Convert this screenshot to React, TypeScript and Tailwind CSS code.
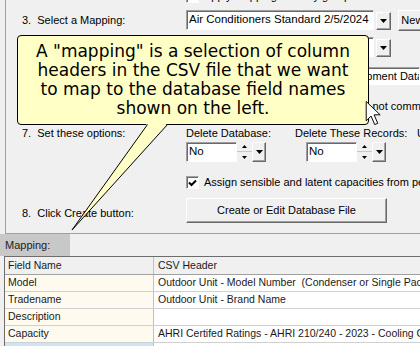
import React from "react";

// Windows-classic style helpers
const raised =
  "bg-[#f0f0f0] border border-t-white border-l-white border-r-[#696969] border-b-[#696969] shadow-[inset_-1px_-1px_0_#a0a0a0]";
const sunken =
  "bg-white border border-t-[#a0a0a0] border-l-[#a0a0a0] border-r-white border-b-white shadow-[inset_1px_1px_0_#696969]";
const label = "w-[180px] shrink-0 pl-[16px]";

function Caret({ up = false, w = 7 }: { up?: boolean; w?: number }) {
  const h = Math.ceil(w / 2);
  return (
    <svg width={w} height={h} viewBox={`0 0 ${w} ${h}`} className="block">
      <polygon
        points={up ? `0,${h} ${w},${h} ${w / 2},0` : `0,0 ${w},0 ${w / 2},${h}`}
        fill="#000"
      />
    </svg>
  );
}

function DropButton() {
  return (
    <div className={`${raised} w-[15px] h-[18px] shrink-0 flex items-center justify-center`}>
      <Caret />
    </div>
  );
}

function Combo({ text }: { text: string }) {
  return (
    <div className="flex items-end gap-[2px] shrink-0">
      <div className={`${sunken} w-[188px] h-[20px] flex items-center pl-[2px] text-[11.5px] whitespace-nowrap overflow-hidden`}>
        {text}
      </div>
      <DropButton />
    </div>
  );
}

function Spinner({ value }: { value: string }) {
  return (
    <div className="flex h-[20px] shrink-0">
      <div className={`${sunken} w-[51px] flex items-center pl-[2px] text-[11.5px]`}>{value}</div>
      <div className="w-[15px] flex flex-col">
        <div className="h-[10px] flex items-center justify-center border-b border-[#c8c8c8]">
          <Caret up w={5} />
        </div>
        <div className="h-[10px] flex items-center justify-center">
          <Caret w={5} />
        </div>
      </div>
      <div className={`${raised} w-[14px] flex items-center justify-center`}>
        <Caret />
      </div>
    </div>
  );
}

function CheckBox({ checked = false }: { checked?: boolean }) {
  return (
    <div className={`${sunken} w-[13px] h-[13px] flex items-center justify-center shrink-0`}>
      {checked && (
        <svg width="9" height="8" viewBox="0 0 9 8">
          <path d="M1 3.5 L3.5 6 L8 1.5" stroke="#000" strokeWidth="2" fill="none" />
        </svg>
      )}
    </div>
  );
}

const rows = [
  { field: "Model", csv: "Outdoor Unit - Model Number  (Condenser or Single Package)" },
  { field: "Tradename", csv: "Outdoor Unit - Brand Name" },
  { field: "Description", csv: "" },
  { field: "Capacity", csv: "AHRI Certifed Ratings - AHRI 210/240 - 2023 - Cooling Capacity (A2) - Single or High Stage (95F), btu/hr" },
];

export default function App() {
  return (
    <div className="relative w-[420px] h-[346px] overflow-hidden bg-[#f0f0f0] text-black text-[11px] font-['Liberation_Sans',Arial,sans-serif]">
      {/* ------------------------------------------------------------------ */}
      {/* Upper group: steps */}
      {/* ------------------------------------------------------------------ */}
      <div className="ml-[5px] h-[234px] border-l border-b border-[#a0a0a0] flex flex-col whitespace-nowrap overflow-hidden">
        {/* row cut off at the top edge */}
        <div className="h-[3px] shrink-0 flex items-end overflow-hidden pl-[180px] gap-[5px] leading-[13px]">
          <CheckBox />
          <span>Apply mapping to every group</span>
        </div>

        <div className="mt-[7px] h-[20px] shrink-0 flex items-center">
          <div className={label}>3.&nbsp;&nbsp;Select a Mapping:</div>
          <Combo text="Air Conditioners Standard 2/5/2024" />
          <div className={`${raised} ml-[7px] w-[74px] h-[21px] flex items-center justify-center shrink-0`}>
            New Mapping
          </div>
        </div>

        <div className="mt-[7px] h-[19px] shrink-0 flex items-center">
          <div className={label}>4.&nbsp;&nbsp;Select a CSV File:</div>
          <Combo text="AHRI Directory Export.csv" />
        </div>

        <div className="mt-[11px] h-[18px] shrink-0 flex items-center">
          <div className={label}>5.&nbsp;&nbsp;Database File:</div>
          <div className={`${sunken} h-[18px] flex-1 flex items-center pl-[2px] overflow-hidden`}>
            C:\Users\Public\Documents\My Equipment Database.accdb
          </div>
        </div>

        <div className="mt-[13px] h-[16px] shrink-0 flex items-center">
          <div className={label}>6.&nbsp;&nbsp;Show fields:</div>
          <span className="shrink-0">Show all the equipment fields that are not commonly used</span>
        </div>

        <div className="mt-[12px] h-[14px] shrink-0 flex items-center">
          <div className={label}>7.&nbsp;&nbsp;Set these options:</div>
          <div className="w-[109px] shrink-0">Delete Database:</div>
          <div className="w-[122px] shrink-0">Delete These Records:</div>
          <div className="shrink-0">Use Defaults:</div>
        </div>

        <div className="mt-[2px] h-[20px] shrink-0 flex pl-[180px]">
          <Spinner value="No" />
          <div className="ml-[40px] shrink-0">
            <Spinner value="No" />
          </div>
        </div>

        <div className="mt-[14px] h-[13px] shrink-0 flex items-center pl-[180px] gap-[5px]">
          <CheckBox checked />
          <span className="shrink-0">Assign sensible and latent capacities from percentages</span>
        </div>

        <div className="mt-[9px] h-[25px] shrink-0 flex">
          <div className={`${label} self-end mb-[3px] leading-[13px]`}>8.&nbsp;&nbsp;Click Create button:</div>
          <div className={`${raised} w-[201px] h-[25px] shrink-0 flex items-center justify-center`}>
            Create or Edit Database File
          </div>
        </div>
      </div>

      {/* ------------------------------------------------------------------ */}
      {/* Mapping grid */}
      {/* ------------------------------------------------------------------ */}
      <div className="h-[22px] flex">
        <div className="w-[70px] bg-[#c8c8c8] pl-[5px] flex items-center text-[#222]">Mapping:</div>
      </div>
      <div className="ml-[4px] border-l border-t border-[#6d6d6d] text-[10.5px] text-[#1a1a1a] whitespace-pre">
        <div className="grid grid-cols-[149px_1fr] h-[18px] border-b border-[#a0a0a0] bg-[#f0f0f0]">
          <div className="pl-[3px] flex items-center border-r border-[#c0c0c0]">Field Name</div>
          <div className="pl-[4px] flex items-center">CSV Header</div>
        </div>
        {rows.map((r) => (
          <div key={r.field} className="grid grid-cols-[149px_1fr] h-[17px] border-b border-[#d0d0d0]">
            <div className="pl-[3px] flex items-center bg-[#fffaf0] border-r border-[#c0c0c0]">{r.field}</div>
            <div className="pl-[4px] flex items-center bg-white overflow-hidden">{r.csv}</div>
          </div>
        ))}
        <div className="grid grid-cols-[149px_1fr] h-[17px]">
          <div className="bg-[#cce4f7] border-r border-[#c0c0c0]" />
          <div className="bg-white" />
        </div>
      </div>

      {/* ------------------------------------------------------------------ */}
      {/* Callout balloon (overlay) */}
      {/* ------------------------------------------------------------------ */}
      <div className="absolute left-[17px] top-[35px] w-[352px] h-[90px] bg-[#ffffc6] border border-black rounded-[4px] pt-[6px] text-center text-[17px] leading-[19px] font-['DejaVu_Sans',Verdana,sans-serif] whitespace-nowrap">
        A "mapping" is a selection of column
        <br />
        headers in the CSV file that we want
        <br />
        to map to the database field names
        <br />
        shown on the left.
      </div>
      <svg className="absolute left-0 top-0" width="420" height="346" viewBox="0 0 420 346">
        <polygon points="147.5,123 72,230 167.5,123" fill="#ffffc6" />
        <path d="M147.5 124.5 L72 230 L167.5 124.5" stroke="#000" strokeWidth="1" fill="none" />
      </svg>

      {/* mouse pointer */}
      <svg className="absolute left-[365px] top-[100px]" width="17" height="26" viewBox="0 0 14 21">
        <path d="M1 1 L1 17 L5 13 L8 20 L10.5 19 L7.5 12 L12.5 12 Z" fill="#fff" stroke="#000" strokeWidth="0.8" />
      </svg>
    </div>
  );
}
